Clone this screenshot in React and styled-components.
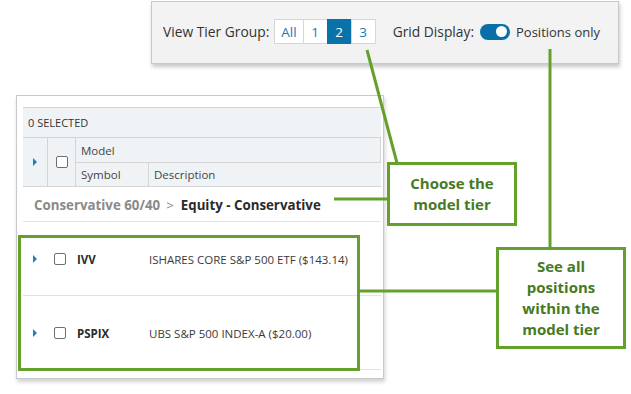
import styled, { createGlobalStyle } from "styled-components";

const GREEN = "#66a02c";
const GREEN_TEXT = "#477a1f";

const GlobalStyle = createGlobalStyle`
    html, body { margin: 0; padding: 0; background: #ffffff; }
    body { font-family: "Open Sans", "Noto Sans", sans-serif; color: #333; }
    * { box-sizing: border-box; }
`;

export default function App(){
    return (
        <>
            <GlobalStyle />
            <Page>
                <TopPanel>
                    <Label>View Tier Group:</Label>
                    <TierGroup>
                        <TierButton>All</TierButton>
                        <TierButton>1</TierButton>
                        <TierButton active>2</TierButton>
                        <TierButton>3</TierButton>
                    </TierGroup>
                    <Label>Grid Display:</Label>
                    <Toggle><Knob /></Toggle>
                    <ToggleText>Positions only</ToggleText>
                </TopPanel>

                <GridPanel>
                    <SelectedBar>0 SELECTED</SelectedBar>
                    <Header>
                        <HeadCell area="arrow"><Caret /></HeadCell>
                        <HeadCell area="check"><Checkbox /></HeadCell>
                        <HeadCell area="model" left>Model</HeadCell>
                        <HeadCell area="symbol" left>Symbol</HeadCell>
                        <HeadCell area="desc" left last>Description</HeadCell>
                    </Header>
                    <Breadcrumb>
                        <Parent>Conservative 60/40</Parent>
                        <Sep>&gt;</Sep>
                        <Current>Equity - Conservative</Current>
                    </Breadcrumb>
                    <Row>
                        <Caret />
                        <Checkbox />
                        <Symbol>IVV</Symbol>
                        <Desc>ISHARES CORE S&amp;P 500 ETF ($143.14)</Desc>
                    </Row>
                    <Row>
                        <Caret />
                        <Checkbox />
                        <Symbol>PSPIX</Symbol>
                        <Desc>UBS S&amp;P 500 INDEX-A ($20.00)</Desc>
                    </Row>
                </GridPanel>

                <Lines width="631" height="394" viewBox="0 0 631 394">
                    <line x1="367" y1="50" x2="397" y2="163" stroke={GREEN} strokeWidth="3" />
                    <line x1="550" y1="49" x2="550" y2="248" stroke={GREEN} strokeWidth="3" />
                    <line x1="334" y1="199" x2="388" y2="199" stroke={GREEN} strokeWidth="3" />
                    <line x1="359" y1="291" x2="497" y2="291" stroke={GREEN} strokeWidth="3" />
                </Lines>
                <Highlight />
                <Callout style={{ left: 387, top: 162, width: 130, height: 64 }}>
                    Choose the<br />model tier
                </Callout>
                <Callout style={{ left: 496, top: 247, width: 130, height: 102 }}>
                    See all<br />positions<br />within the<br />model tier
                </Callout>
            </Page>
        </>
    )
}

const Page = styled.div`
    position: relative;
    width: 631px;
    height: 394px;
    overflow: hidden;
    background: #fff;
`

const TopPanel = styled.div`
    display: flex;
    align-items: center;
    margin-left: 151px;
    margin-top: 1px;
    width: 468px;
    height: 63px;
    padding: 0 0 2px 11px;
    background: linear-gradient(#f4f4f4, #f1f1f1);
    border: 1px solid #c9c9c9;
    box-shadow: 1px 3px 4px rgba(0, 0, 0, 0.22);
`

const Label = styled.span`
    font-size: 13.8px;
    color: #333;
    margin-right: 6px;
`

const TierGroup = styled.div`
    display: flex;
    margin-right: 17px;
`

const TierButton = styled.div`
    display: flex;
    align-items: center;
    justify-content: center;
    height: 25px;
    padding: 0 6px;
    min-width: 25px;
    font-size: 13.5px;
    border: 1px solid #d6d6d6;
    margin-left: -1px;
    background: ${p => p.active ? "#0a72aa" : "#fff"};
    border-color: ${p => p.active ? "#0a72aa" : "#d6d6d6"};
    color: ${p => p.active ? "#fff" : "#1a78b6"};
`

const Toggle = styled.div`
    display: flex;
    justify-content: flex-end;
    align-items: center;
    width: 30px;
    height: 16px;
    padding: 0 3px;
    border-radius: 8px;
    background: #0a6ea8;
    margin: 0 6px 0 0;
`

const Knob = styled.div`
    width: 11px;
    height: 11px;
    border-radius: 50%;
    background: #fff;
`

const ToggleText = styled.span`
    font-size: 13px;
    color: #333;
`

const GridPanel = styled.div`
    margin: 31px 0 0 16px;
    width: 368px;
    height: 284px;
    padding: 11px 2px 0 6px;
    background: #fff;
    border: 1px solid #c9c9c9;
    box-shadow: 1px 3px 4px rgba(0, 0, 0, 0.18);
`

const SelectedBar = styled.div`
    display: flex;
    align-items: center;
    height: 31px;
    padding-left: 5px;
    background: #f0f3f6;
    border-top: 1px solid #d5d5d5;
    border-bottom: 1px solid #d5d5d5;
    font-size: 11px;
    color: #333;
`

const Header = styled.div`
    display: grid;
    grid-template-columns: 25px 28px 73px 1fr;
    grid-template-rows: 25px 23px;
    grid-template-areas:
        "arrow check model model"
        "arrow check symbol desc";
    background: #f0f3f6;
    border-bottom: 1px solid #d5d5d5;
`

const HeadCell = styled.div`
    grid-area: ${p => p.area};
    display: flex;
    align-items: center;
    justify-content: ${p => p.left ? "flex-start" : "center"};
    padding-left: ${p => p.left ? "5px" : "0"};
    font-size: 11.5px;
    color: #444;
    border-right: ${p => p.last ? "none" : "1px solid #d5d5d5"};
    border-bottom: ${p => p.area === "model" ? "1px solid #d5d5d5" : "none"};
`

const Caret = styled.span`
    width: 0;
    height: 0;
    border-top: 4px solid transparent;
    border-bottom: 4px solid transparent;
    border-left: 4px solid #1d7fc4;
`

const Checkbox = styled.span`
    display: inline-block;
    width: 12px;
    height: 12px;
    border: 1px solid #707070;
    border-radius: 2px;
    background: #fff;
`

const Breadcrumb = styled.div`
    display: flex;
    align-items: center;
    height: 35px;
    padding: 2px 0 0 11px;
    border-bottom: 1px solid #e3e3e3;
    font-size: 13.3px;
`

const Parent = styled.span`
    font-weight: 700;
    color: #8a8a8a;
`

const Sep = styled.span`
    color: #8a8a8a;
    margin: 0 7px 0 6px;
`

const Current = styled.span`
    font-weight: 700;
    color: #2b2b2b;
`

const Row = styled.div`
    display: flex;
    align-items: center;
    height: 74px;
    padding: 1px 0 0 10px;
    border-bottom: 1px solid #e3e3e3;
    ${Caret} { margin-right: 17px; }
    ${Checkbox} { margin-right: 11px; }
`

const Symbol = styled.span`
    width: 72px;
    font-size: 11.5px;
    font-weight: 700;
    color: #2b2b2b;
`

const Desc = styled.span`
    font-size: 11.5px;
    color: #3a3a3a;
`

const Lines = styled.svg`
    position: absolute;
    left: 0;
    top: 0;
    pointer-events: none;
`

const Highlight = styled.div`
    position: absolute;
    left: 18px;
    top: 235px;
    width: 342px;
    height: 136px;
    border: 3px solid ${GREEN};
`

const Callout = styled.div`
    position: absolute;
    display: flex;
    align-items: center;
    justify-content: center;
    border: 3px solid ${GREEN};
    background: #fff;
    text-align: center;
    font-size: 15px;
    font-weight: 700;
    line-height: 21px;
    color: ${GREEN_TEXT};
`
